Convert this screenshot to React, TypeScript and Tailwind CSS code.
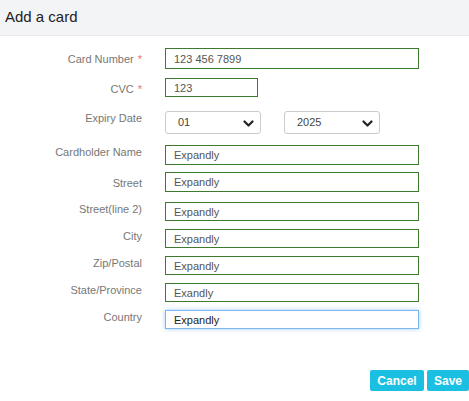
import React from "react";

type Row = {
  label: string;
  value: string;
  required?: boolean;
  mt: string;
  pt: string;
  h: string;
  w?: string;
  focus?: boolean;
};

const rows: Row[] = [
  { label: "Card Number", value: "123 456 7899", required: true, mt: "mt-[12px]", pt: "pt-[4px]", h: "h-[21px]" },
  { label: "CVC", value: "123", required: true, mt: "mt-[9px]", pt: "pt-[4px]", h: "h-[19px]", w: "w-[93px]" },
];

const addressRows: Row[] = [
  { label: "Cardholder Name", value: "Expandly", mt: "mt-[11px]", pt: "pt-0", h: "h-[20px]" },
  { label: "Street", value: "Expandly", mt: "mt-[7px]", pt: "pt-[4px]", h: "h-[20px]" },
  { label: "Street(line 2)", value: "Expandly", mt: "mt-[10px]", pt: "pt-0", h: "h-[19px]" },
  { label: "City", value: "Expandly", mt: "mt-[8px]", pt: "pt-0", h: "h-[19px]" },
  { label: "Zip/Postal", value: "Expandly", mt: "mt-[8px]", pt: "pt-0", h: "h-[19px]" },
  { label: "State/Province", value: "Exandly", mt: "mt-[8px]", pt: "pt-0", h: "h-[19px]" },
  { label: "Country", value: "Expandly", mt: "mt-[8px]", pt: "pt-0", h: "h-[19px]", focus: true },
];

function Chevron() {
  return (
    <svg width="11" height="8" viewBox="0 0 11 8" className="pointer-events-none absolute right-[6px] top-[8px]">
      <path d="M1.5 1.5 L5.5 5.5 L9.5 1.5" fill="none" stroke="#222" strokeWidth="2.2" strokeLinecap="round" strokeLinejoin="round" />
    </svg>
  );
}

function FieldRow({ row }: { row: Row }) {
  return (
    <div className={`flex items-start ${row.mt}`}>
      <div className={`w-[142px] shrink-0 text-right text-[11px] leading-[14px] text-[#777] ${row.pt}`}>
        {row.label}
        {row.required && <span className="ml-[4px] text-[#e57373]">*</span>}
      </div>
      <input
        readOnly
        value={row.value}
        className={`ml-[23px] ${row.w ?? "w-[254px]"} ${row.h} border px-[8px] text-[11px] outline-none ${
          row.focus
            ? "border-[#7ab8f0] text-[#222] shadow-[0_0_4px_rgba(100,170,240,0.6)]"
            : "border-[#3d7a2e] text-[#555]"
        }`}
      />
    </div>
  );
}

function Select({ value }: { value: string }) {
  return (
    <div className="relative h-[23px] w-[96px] rounded-[3px] border border-[#ccc] bg-white">
      <div className="pl-[12px] text-[11px] leading-[21px] text-[#444]">{value}</div>
      <Chevron />
    </div>
  );
}

export default function App() {
  return (
    <div className="h-[401px] w-[469px] bg-white font-['Liberation_Sans',Arial,sans-serif]">
      <div className="h-[36px] border-b border-[#e5e7eb] bg-[#f3f4f6] pl-[5px] pt-[6px] text-[15px] font-medium text-[#222]">
        Add a card
      </div>
      {rows.map((r) => (
        <FieldRow key={r.label} row={r} />
      ))}
      <div className="mt-[14px] flex items-start">
        <div className="w-[142px] shrink-0 text-right text-[11px] leading-[14px] text-[#777]">Expiry Date</div>
        <div className="ml-[23px] flex gap-[23px]">
          <Select value="01" />
          <Select value="2025" />
        </div>
      </div>
      {addressRows.map((r) => (
        <FieldRow key={r.label} row={r} />
      ))}
      <div className="mt-[41px] flex justify-end gap-[3px]">
        <button className="h-[21px] w-[54px] rounded-[2px] bg-[#1bbfe2] text-[12px] font-bold text-white">Cancel</button>
        <button className="h-[21px] w-[42px] rounded-[2px] bg-[#1bbfe2] text-[12px] font-bold text-white">Save</button>
      </div>
    </div>
  );
}
